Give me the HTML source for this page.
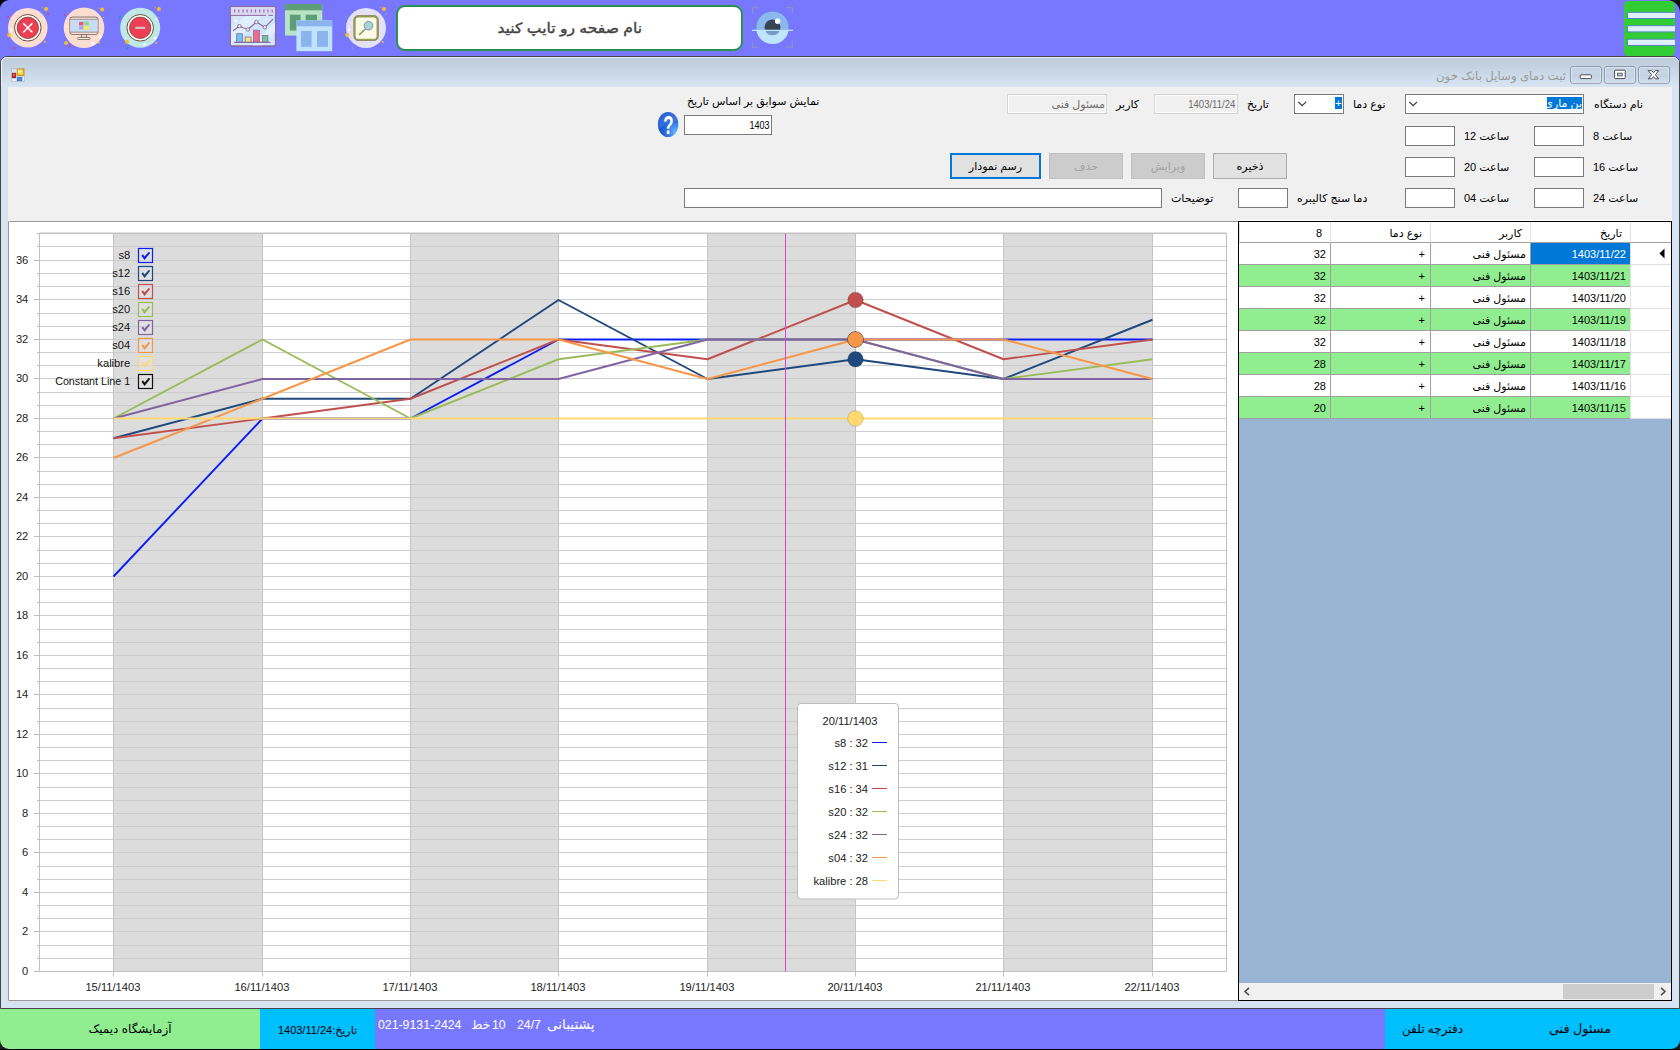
<!DOCTYPE html><html lang="fa"><head><meta charset="utf-8"><title>ثبت دمای وسایل بانک خون</title><style>
*{box-sizing:border-box;margin:0;padding:0}
html,body{width:1680px;height:1050px;overflow:hidden;background:#7878ff;font-family:"Liberation Sans", "DejaVu Sans", sans-serif;font-size:11px;color:#000}
.abs{position:absolute}
#top{position:absolute;left:0;top:0;width:1680px;height:56px;background:#7878ff}
#win{position:absolute;left:0;top:56px;width:1680px;height:953px;background:#d6e3f1;border:1px solid #464646;border-radius:7px 7px 0 0}
#title{position:absolute;left:0;top:0;width:1678px;height:30px;background:linear-gradient(#bdccdb,#c6d4e3 40%,#d7e5f3);border-top:1px solid #e7edf5;border-left:1px solid #eef3f9;border-radius:6px 6px 0 0}
#client{position:absolute;left:8px;top:87px;width:1664px;height:914px;background:#f0f0f0}
.lbl{position:absolute;white-space:nowrap;direction:rtl;font-size:11px;line-height:14px;height:14px}
.tb{position:absolute;background:#fff;border:1px solid #7a7a7a;height:20px}
.dis{position:absolute;background:#f0f0f0;border:1px solid #d4d4d4;box-shadow:inset 0 0 0 1px #fbfbfb;height:20px;color:#6d6d6d;text-align:right;padding:3px 3px 0 0;line-height:12px;font-size:11px;white-space:nowrap;direction:rtl}
.btn{position:absolute;height:26px;text-align:center;line-height:25px;font-size:11px;direction:rtl;white-space:nowrap}
.btn.on{background:#e1e1e1;border:1px solid #adadad}
.btn.off{background:#cccccc;border:1px solid #bfbfbf;color:#a3a3a3}
.btn.foc{background:#e1e1e1;border:2px solid #0078d7;line-height:23px}
#status{position:absolute;left:0;top:1009px;width:1680px;height:40px;background:#7878ff}
#status div{position:absolute;top:0;height:40px;white-space:nowrap;direction:rtl}
#grid{position:absolute;left:1238px;top:221px;width:434px;height:780px;background:#9ab4d3;border:1px solid #000;overflow:hidden}
.cell{position:absolute;height:22px;border-left:1px solid #a0a0a0;border-bottom:1px solid #a0a0a0;text-align:right;line-height:23px;font-size:11px;white-space:nowrap;direction:rtl;padding-right:4px;background:#fff;overflow:hidden}
.g .cell{background:#90ee90}
.hd{position:absolute;height:21px;background:#fff;border-left:1px solid #e0e0e0;border-bottom:1px solid #a0a0a0;text-align:right;line-height:22px;padding-right:8px;direction:rtl;white-space:nowrap;overflow:hidden}
</style></head><body>
<div id="top">
<svg class="abs" style="left:0;top:0" width="820" height="56" viewBox="0 0 820 56"><path d="M0 0H9A9 9 0 0 0 0 9Z" fill="#000"/><circle cx="27.8" cy="27.8" r="19.8" fill="#fbddd2"/><circle cx="27.8" cy="27.8" r="13.3" fill="#fffaee" stroke="#6b4c45" stroke-width="1"/><circle cx="27.8" cy="27.8" r="10.7" fill="#ee3e54" stroke="#6b4c45" stroke-width="0.8"/><path d="M23.6 23.6L32 32M32 23.6L23.6 32" stroke="#fff" stroke-width="1.5" stroke-linecap="round"/><circle cx="46.0" cy="9.1" r="2.0" fill="#f6bf26"/><circle cx="48.0" cy="14.0" r="1.0" fill="#ee3e54"/><circle cx="8.1" cy="16.5" r="1.0" fill="#ee3e54"/><circle cx="9.1" cy="35.0" r="2.0" fill="#f6bf26"/><circle cx="44.8" cy="41.8" r="1.0" fill="#f6bf26"/><circle cx="14.5" cy="47.9" r="1.0" fill="#ee3e54"/><circle cx="11.0" cy="29.9" r="1.3" fill="#ffffff"/><circle cx="44.0" cy="19.0" r="0.8" fill="#ffffff"/><circle cx="12.4" cy="37.2" r="0.6" fill="#f6bf26"/><circle cx="42.3" cy="7.6" r="0.5" fill="#f6bf26"/><circle cx="84" cy="27.8" r="20.3" fill="#fbddd2"/><rect x="81.5" y="34" width="5" height="4" fill="#ddd6cc" stroke="#6b4c45" stroke-width="0.7"/><rect x="77.6" y="37.5" width="12.4" height="2" rx="0.8" fill="#fff8e9" stroke="#6b4c45" stroke-width="0.7"/><rect x="69.9" y="17.1" width="28.1" height="17.3" rx="2.2" fill="#fff3e4" stroke="#6b4c45" stroke-width="0.8"/><rect x="70.3" y="19.2" width="27.3" height="13" fill="#c6dcf4"/><path d="M70.3 19.2H97.6M70.3 32.2H97.6" stroke="#6b4c45" stroke-width="0.6"/><rect x="79" y="21.9" width="4.3" height="3.5" fill="#f0508c"/><rect x="83.9" y="21.4" width="4.8" height="4" fill="#8edb8e"/><rect x="79" y="25.9" width="4.3" height="3.4" fill="#a9a9e2"/><rect x="83.9" y="25.9" width="4.8" height="3.9" fill="#f8ea52"/><circle cx="102.2" cy="9.6" r="2.0" fill="#f6bf26"/><circle cx="64.6" cy="15.0" r="1.0" fill="#ee3e54"/><circle cx="66.1" cy="43.0" r="2.0" fill="#f6bf26"/><circle cx="69.8" cy="45.9" r="1.0" fill="#ee3e54"/><circle cx="99.0" cy="42.5" r="1.0" fill="#f6bf26"/><circle cx="92.9" cy="43.3" r="1.5" fill="#ffffff"/><circle cx="100.2" cy="36.6" r="1.3" fill="#ffffff"/><circle cx="65.6" cy="26.8" r="0.7" fill="#ffffff"/><circle cx="103.4" cy="17.7" r="0.6" fill="#f6bf26"/><circle cx="98.8" cy="8.0" r="0.5" fill="#f6bf26"/><circle cx="140.2" cy="27.8" r="20" fill="#c0e8e4"/><circle cx="140.2" cy="27.8" r="13.3" fill="#fffaee" stroke="#6b4c45" stroke-width="1"/><circle cx="140.2" cy="27.8" r="10.7" fill="#ee3e54" stroke="#6b4c45" stroke-width="0.8"/><rect x="135.2" y="26.7" width="10" height="2.3" rx="0.6" fill="#cbc2c0"/><circle cx="158.9" cy="9.1" r="2.0" fill="#f6bf26"/><circle cx="120.0" cy="16.7" r="1.0" fill="#12a085"/><circle cx="127.0" cy="41.8" r="2.0" fill="#f6bf26"/><circle cx="127.5" cy="47.9" r="1.0" fill="#12a085"/><circle cx="156.2" cy="43.0" r="1.0" fill="#f6bf26"/><circle cx="144.7" cy="44.3" r="1.4" fill="#ffffff"/><circle cx="155.4" cy="38.0" r="1.2" fill="#ffffff"/><circle cx="155.9" cy="19.2" r="0.7" fill="#ffffff"/><circle cx="125.5" cy="38.5" r="0.6" fill="#ffffff"/><circle cx="158.8" cy="17.6" r="0.6" fill="#f0a080"/><circle cx="155.4" cy="7.6" r="0.5" fill="#f6bf26"/><rect x="230.3" y="6.6" width="45.3" height="39.3" rx="2" fill="#cfe6fb" stroke="#8e6ba0" stroke-width="1.5"/><path d="M230.9 7.2H275V15.3H230.9Z" fill="#dcd8f2"/><path d="M231 30L246 15.5H262L240 37.5L231 45.3ZM252 45.3L275 22V32L262 45.3Z" fill="#e2f1fd" opacity="0.8"/><path d="M231 15.4H266M268.5 15.4H273" stroke="#8e6ba0" stroke-width="1"/><path d="M234.6 9.6V12.6M238.8 9.6V12.6M243.0 9.6V12.6M247.1 9.6V12.6M251.3 9.6V12.6M255.5 9.6V12.6M259.7 9.6V12.6M263.9 9.6V12.6M268.0 9.6V12.6M272.2 9.6V12.6" stroke="#8e6ba0" stroke-width="1.1"/><rect x="236.7" y="33.7" width="5.8" height="8.6" fill="#6fc3f3" stroke="#8e6ba0" stroke-width="0.8"/><rect x="245.2" y="37" width="5.8" height="5.3" fill="#f9e272" stroke="#8e6ba0" stroke-width="0.8"/><rect x="253.5" y="30.2" width="6" height="12.1" fill="#f06a8c" stroke="#8e6ba0" stroke-width="0.8"/><rect x="262.3" y="35.4" width="5.6" height="6.9" fill="#6cc89a" stroke="#8e6ba0" stroke-width="0.8"/><path d="M234.4 42.4H270" stroke="#8e6ba0" stroke-width="1.1" stroke-linecap="round"/><path d="M233.4 30.5L239.3 26.2L247.9 29.5L256.4 22L264.8 27.3L272.8 19.3" fill="none" stroke="#8e6ba0" stroke-width="1.2" stroke-linecap="round" stroke-linejoin="round"/><circle cx="239.3" cy="26.2" r="1.7" fill="#fff" stroke="#8e6ba0" stroke-width="1"/><circle cx="247.9" cy="29.5" r="1.7" fill="#fff" stroke="#8e6ba0" stroke-width="1"/><circle cx="256.4" cy="22.0" r="1.7" fill="#fff" stroke="#8e6ba0" stroke-width="1"/><circle cx="264.8" cy="27.3" r="1.7" fill="#fff" stroke="#8e6ba0" stroke-width="1"/><path d="M235.9 18.6L236.7 20.3L238.4 20.9L236.7 21.6L235.9 23.3L235.1 21.6L233.4 20.9L235.1 20.3Z" fill="#fff"/><circle cx="246.6" cy="22.3" r="0.8" fill="#ffffff"/><circle cx="266.0" cy="19.6" r="1.1" fill="#f4eefa"/><rect x="285" y="4" width="37.3" height="31.6" fill="#b7e2c3"/><rect x="285" y="4" width="37.3" height="6.3" fill="#5e9e76"/><rect x="289.9" y="14.7" width="10.7" height="15.8" fill="#5e9e76"/><rect x="305.7" y="14.7" width="11.3" height="15.8" fill="#5e9e76"/><rect x="296.4" y="20.4" width="35.8" height="30.8" fill="#bfe3fd"/><rect x="296.4" y="20.4" width="35.8" height="5.9" fill="#8bb4ec"/><rect x="301" y="31" width="10.6" height="15.8" fill="#8bb4ec"/><rect x="317" y="31" width="11" height="15.8" fill="#8bb4ec"/><circle cx="366" cy="27.9" r="20" fill="#e3e0f8"/><rect x="354.6" y="16.4" width="23" height="23.4" rx="3.6" fill="#fdf9e8" stroke="#96a352" stroke-width="2.1"/><rect x="353.9" y="15.7" width="24.4" height="24.8" rx="4.2" fill="none" stroke="#7d6a55" stroke-width="0.5"/><path d="M365.6 28.8L362.8 31.4" stroke="#8a8a9a" stroke-width="1.4"/><path d="M363 31.2L359.6 34.3" stroke="#78b450" stroke-width="1.8" stroke-linecap="round"/><circle cx="368.5" cy="25.7" r="4.3" fill="#a0d8da" stroke="#8a8a9a" stroke-width="1"/><circle cx="384.0" cy="9.1" r="2.0" fill="#f6bf26"/><circle cx="347.2" cy="35.0" r="2.0" fill="#f6bf26"/><circle cx="345.9" cy="16.6" r="0.8" fill="#9a9ccc"/><circle cx="386.0" cy="13.9" r="0.8" fill="#9a9ccc"/><circle cx="382.9" cy="42.0" r="1.0" fill="#f6bf26"/><circle cx="352.5" cy="47.9" r="0.8" fill="#9a9ccc"/><circle cx="349.1" cy="29.8" r="1.2" fill="#ffffff"/><circle cx="380.6" cy="7.6" r="0.5" fill="#f6bf26"/><circle cx="350.5" cy="37.2" r="0.5" fill="#f6bf26"/><circle cx="375.5" cy="25.8" r="0.6" fill="#ffffff"/><circle cx="382.3" cy="19.6" r="0.6" fill="#ffffff"/><path d="M756.34 30.4A16.4 16.4 0 1 1 788.66 30.4Z" fill="#8bb8ee" stroke="#5d86c8" stroke-width="0.5"/><path d="M756.34 30.4A16.4 16.4 0 0 0 788.66 30.4Z" fill="#bfe5fd"/><path d="M765.19 30.4A7.9 7.9 0 1 1 779.81 30.4Z" fill="#3a4553"/><path d="M765.19 30.4A7.9 7.9 0 0 0 779.81 30.4Z" fill="#7a9bc8"/><path d="M752 30.4H793" stroke="#bfe5fd" stroke-width="1.1"/><circle cx="777.6" cy="21.3" r="2.7" fill="#fff"/><path d="M752.6 13.8V7.7H759M786 7.7H792.4V13.8M792.4 41V47.4H786M759 47.4H752.6V41" fill="none" stroke="#8990c4" stroke-width="1.2"/></svg><svg class="abs" style="left:1620px;top:0" width="60" height="57" viewBox="1620 0 60 57"><defs><clipPath id="hbc"><rect x="1624" y="1" width="51" height="55" rx="4.5"/></clipPath></defs><rect x="1624" y="1" width="51" height="55" rx="4.5" fill="#32cd32"/><rect x="1627.4" y="12.3" width="52" height="6.2" fill="#e0f0ff" stroke="#4f86c0" stroke-width="1" clip-path="url(#hbc)"/><rect x="1627.4" y="25.7" width="52" height="6.2" fill="#e0f0ff" stroke="#4f86c0" stroke-width="1" clip-path="url(#hbc)"/><rect x="1627.4" y="39.2" width="52" height="6.2" fill="#e0f0ff" stroke="#4f86c0" stroke-width="1" clip-path="url(#hbc)"/><path d="M1667 0H1680V13A13 13 0 0 0 1667 0Z" fill="#111"/></svg>
<div class="abs" style="left:396px;top:5px;width:347px;height:46px;background:#fff;border:2px solid #2a9150;border-radius:9px;text-align:center;line-height:43px;font-size:14.2px;font-weight:normal;-webkit-text-stroke:0.4px #444;color:#444;direction:rtl"><span style="display:inline-block;transform:scaleX(1.1)">نام صفحه رو تایپ کنید</span></div>
</div>
<div id="win"><div id="title"></div></div>
<div class="lbl" style="left:1300px;width:266px;top:68px;text-align:right;font-size:11.8px;color:#9a9a9a;line-height:16px;height:16px">ثبت دمای وسایل بانک خون</div>
<svg class="abs" style="left:0;top:56px" width="1680" height="32" viewBox="0 56 1680 32"><defs><linearGradient id="bg1" x1="0" y1="0" x2="0" y2="1"><stop offset="0" stop-color="#c4d1e1"/><stop offset="0.45" stop-color="#c9d6e6"/><stop offset="0.5" stop-color="#c2d0e1"/><stop offset="1" stop-color="#d3dfee"/></linearGradient></defs><rect x="1570.5" y="66.5" width="31" height="16.8" rx="2.5" fill="url(#bg1)" stroke="#8c9bb3" stroke-width="1"/><rect x="1571.5" y="67.5" width="29" height="14.8" rx="1.8" fill="none" stroke="#e4ecf6" stroke-width="0.8" opacity="0.8"/><rect x="1604.5" y="66.5" width="31" height="16.8" rx="2.5" fill="url(#bg1)" stroke="#8c9bb3" stroke-width="1"/><rect x="1605.5" y="67.5" width="29" height="14.8" rx="1.8" fill="none" stroke="#e4ecf6" stroke-width="0.8" opacity="0.8"/><rect x="1638.5" y="66.5" width="31" height="16.8" rx="2.5" fill="url(#bg1)" stroke="#8c9bb3" stroke-width="1"/><rect x="1639.5" y="67.5" width="29" height="14.8" rx="1.8" fill="none" stroke="#e4ecf6" stroke-width="0.8" opacity="0.8"/><rect x="1580.2" y="74.8" width="11.2" height="3.8" rx="0.8" fill="#fff" stroke="#4a4f58" stroke-width="1"/><rect x="1614.6" y="70.2" width="10.6" height="8.4" rx="0.8" fill="#fff" stroke="#4a4f58" stroke-width="1"/><rect x="1617.6" y="73.2" width="4.6" height="2.6" fill="#c6d3e3" stroke="#4a4f58" stroke-width="0.9"/><path d="M1648.2 70.6H1651.7L1653.5 72.8L1655.3 70.6H1658.8L1655.3 74.7L1658.8 78.8H1655.3L1653.5 76.6L1651.7 78.8H1648.2L1651.7 74.7Z" fill="#fff" stroke="#4a4f58" stroke-width="1" stroke-linejoin="round"/><rect x="11.5" y="68.5" width="13" height="13" fill="#d4e1ee" stroke="#b9bfc6" stroke-width="0.8"/><rect x="17.2" y="69" width="6.6" height="6.6" fill="#f8cf3a" stroke="#b88a00" stroke-width="0.8"/><rect x="18" y="69.8" width="3.6" height="3" fill="#fff3b0" opacity="0.85"/><rect x="12.2" y="73.2" width="3.6" height="4.6" fill="#c8201c" stroke="#8a0c0a" stroke-width="0.6"/><rect x="13.4" y="74" width="1.2" height="1.8" fill="#f4b0a8" opacity="0.9"/><rect x="17.2" y="77.2" width="4.8" height="3.6" fill="#4a8ae0" stroke="#2a60b8" stroke-width="0.5"/><rect x="12.4" y="79" width="1.8" height="1.8" fill="#f4f7fb"/><rect x="14.8" y="79" width="1.2" height="1.8" fill="#f4f7fb"/><rect x="22.8" y="77.2" width="1.2" height="3.6" fill="#eef3f9"/></svg>
<div id="client"></div>
<div class="lbl" style="right:37px;top:97px;">نام دستگاه</div>
<div class="lbl" style="left:1593px;top:129px;">ساعت 8</div>
<div class="lbl" style="left:1593px;top:160px;">ساعت 16</div>
<div class="lbl" style="left:1593px;top:191px;">ساعت 24</div>
<div class="lbl" style="left:1464px;top:129px;">ساعت 12</div>
<div class="lbl" style="left:1464px;top:160px;">ساعت 20</div>
<div class="lbl" style="left:1464px;top:191px;">ساعت 04</div>
<div class="lbl" style="left:1353px;top:97px;">نوع دما</div>
<div class="lbl" style="left:1247px;top:97px;">تاریخ</div>
<div class="lbl" style="left:1116px;top:97px;">کاربر</div>
<div class="lbl" style="left:1297px;top:191px;">دما سنج کالیبره</div>
<div class="lbl" style="left:1171px;top:191px;">توضیحات</div>
<div class="lbl" style="left:687px;top:94px;">نمایش سوابق بر اساس تاریخ</div>
<div class="tb" style="left:1405px;top:94px;width:179px;height:20px"><div class="abs" style="right:1px;top:2px;height:12px;width:35px;background:#0078d7;color:#fff;direction:rtl;text-align:right;line-height:12px;font-size:11px;white-space:nowrap;overflow:hidden">بن ماری</div><svg class="abs" style="left:3px;top:5px" width="12" height="8" viewBox="0 0 12 8"><path d="M0.4 1.9 L4.2 5.6 L8 1.9" fill="none" stroke="#3c3c3c" stroke-width="1.3"/></svg></div>
<div class="tb" style="left:1294px;top:94px;width:50px;height:20px"><div class="abs" style="right:1px;top:2px;height:12px;width:7px;background:#0078d7;color:#fff;text-align:center;line-height:12px;font-size:11px">+</div><svg class="abs" style="left:3px;top:5px" width="12" height="8" viewBox="0 0 12 8"><path d="M0.4 1.9 L4.2 5.6 L8 1.9" fill="none" stroke="#3c3c3c" stroke-width="1.3"/></svg></div>
<div class="tb" style="left:1534px;top:126px;width:50px"></div>
<div class="tb" style="left:1534px;top:157px;width:50px"></div>
<div class="tb" style="left:1534px;top:188px;width:50px"></div>
<div class="tb" style="left:1405px;top:126px;width:50px"></div>
<div class="tb" style="left:1405px;top:157px;width:50px"></div>
<div class="tb" style="left:1405px;top:188px;width:50px"></div>
<div class="tb" style="left:1238px;top:188px;width:50px"></div>
<div class="tb" style="left:684px;top:188px;width:478px"></div>
<div class="tb" style="left:684px;top:115px;width:88px;text-align:right;padding:3px 2px 0 0;line-height:12px;font-size:11px"><span style="display:inline-block;transform:scaleX(0.82);transform-origin:right center">1403</span></div>
<div class="dis" style="left:1154px;top:94px;width:84px;direction:ltr;padding-right:2px;font-size:10.6px"><span style="display:inline-block;transform:scaleX(0.9);transform-origin:right center">1403/11/24</span></div>
<div class="dis" style="left:1007px;top:94px;width:100px;padding-right:1px">مسئول فنی</div>
<div class="btn on" style="left:1213px;top:153px;width:74px">ذخیره</div>
<div class="btn off" style="left:1131px;top:153px;width:74px">ویرایش</div>
<div class="btn off" style="left:1049px;top:153px;width:74px">حذف</div>
<div class="btn foc" style="left:950px;top:153px;width:91px">رسم نمودار</div>
<svg class="abs" style="left:656px;top:110px" width="24" height="29" viewBox="656 110 24 29"><defs><radialGradient id="hg" cx="0.85" cy="0.8" r="0.95"><stop offset="0" stop-color="#62b8ff"/><stop offset="0.45" stop-color="#2f70de"/><stop offset="1" stop-color="#0f44c6"/></radialGradient><clipPath id="hc"><ellipse cx="668.1" cy="124.5" rx="10.2" ry="12.6"/></clipPath></defs><ellipse cx="668.1" cy="124.5" rx="10.2" ry="12.6" fill="url(#hg)"/><path d="M656 132 C662 124 672 121 681 120 V108 H656Z" fill="#5f8ee4" opacity="0.38" clip-path="url(#hc)"/><text transform="translate(668.4 134.2) scale(0.66 1)" text-anchor="middle" font-family="'Liberation Sans', sans-serif" font-weight="bold" font-size="25.5" fill="#fff">?</text></svg>
<svg class="abs" style="left:8px;top:221px" width="1230" height="780" viewBox="8 221 1230 780" font-family="'Liberation Sans', 'DejaVu Sans', sans-serif" font-size="11.15"><rect x="8" y="221" width="1230" height="780" fill="#fff"/><path d="M1238 221.5 H8.5 V1000.5 H1238" fill="none" stroke="#9a9a9a" stroke-width="1"/><rect x="113.5" y="233.5" width="149.0" height="738.0" fill="#dcdcdc"/><rect x="410.5" y="233.5" width="148.0" height="738.0" fill="#dcdcdc"/><rect x="707.5" y="233.5" width="148.0" height="738.0" fill="#dcdcdc"/><rect x="1003.5" y="233.5" width="149.0" height="738.0" fill="#dcdcdc"/><path d="M39.5 971.50H1226.5M39.5 958.50H1226.5M39.5 945.50H1226.5M39.5 931.50H1226.5M39.5 918.50H1226.5M39.5 905.50H1226.5M39.5 892.50H1226.5M39.5 879.50H1226.5M39.5 866.50H1226.5M39.5 852.50H1226.5M39.5 839.50H1226.5M39.5 826.50H1226.5M39.5 813.50H1226.5M39.5 800.50H1226.5M39.5 787.50H1226.5M39.5 773.50H1226.5M39.5 760.50H1226.5M39.5 747.50H1226.5M39.5 734.50H1226.5M39.5 721.50H1226.5M39.5 708.50H1226.5M39.5 694.50H1226.5M39.5 681.50H1226.5M39.5 668.50H1226.5M39.5 655.50H1226.5M39.5 642.50H1226.5M39.5 629.50H1226.5M39.5 615.50H1226.5M39.5 602.50H1226.5M39.5 589.50H1226.5M39.5 576.50H1226.5M39.5 563.50H1226.5M39.5 550.50H1226.5M39.5 536.50H1226.5M39.5 523.50H1226.5M39.5 510.50H1226.5M39.5 497.50H1226.5M39.5 484.50H1226.5M39.5 471.50H1226.5M39.5 457.50H1226.5M39.5 444.50H1226.5M39.5 431.50H1226.5M39.5 418.50H1226.5M39.5 405.50H1226.5M39.5 392.50H1226.5M39.5 378.50H1226.5M39.5 365.50H1226.5M39.5 352.50H1226.5M39.5 339.50H1226.5M39.5 326.50H1226.5M39.5 313.50H1226.5M39.5 299.50H1226.5M39.5 286.50H1226.5M39.5 273.50H1226.5M39.5 260.50H1226.5M39.5 246.50H1226.5M39.5 233.50H1226.5" stroke="#c9c9c9" stroke-width="1" fill="none" opacity="0.9"/><path d="M34.0 971.50H39.5M37.0 958.50H39.5M37.0 945.50H39.5M34.0 931.50H39.5M37.0 918.50H39.5M37.0 905.50H39.5M34.0 892.50H39.5M37.0 879.50H39.5M37.0 866.50H39.5M34.0 852.50H39.5M37.0 839.50H39.5M37.0 826.50H39.5M34.0 813.50H39.5M37.0 800.50H39.5M37.0 787.50H39.5M34.0 773.50H39.5M37.0 760.50H39.5M37.0 747.50H39.5M34.0 734.50H39.5M37.0 721.50H39.5M37.0 708.50H39.5M34.0 694.50H39.5M37.0 681.50H39.5M37.0 668.50H39.5M34.0 655.50H39.5M37.0 642.50H39.5M37.0 629.50H39.5M34.0 615.50H39.5M37.0 602.50H39.5M37.0 589.50H39.5M34.0 576.50H39.5M37.0 563.50H39.5M37.0 550.50H39.5M34.0 536.50H39.5M37.0 523.50H39.5M37.0 510.50H39.5M34.0 497.50H39.5M37.0 484.50H39.5M37.0 471.50H39.5M34.0 457.50H39.5M37.0 444.50H39.5M37.0 431.50H39.5M34.0 418.50H39.5M37.0 405.50H39.5M37.0 392.50H39.5M34.0 378.50H39.5M37.0 365.50H39.5M37.0 352.50H39.5M34.0 339.50H39.5M37.0 326.50H39.5M37.0 313.50H39.5M34.0 299.50H39.5M37.0 286.50H39.5M37.0 273.50H39.5M34.0 260.50H39.5M37.0 246.50H39.5M37.0 233.50H39.5" stroke="#bdbdbd" stroke-width="1" fill="none"/><path d="M113.5 233.5V976.5M262.5 233.5V976.5M410.5 233.5V976.5M558.5 233.5V976.5M707.5 233.5V976.5M855.5 233.5V976.5M1003.5 233.5V976.5M1152.5 233.5V976.5" stroke="#c4c4c4" stroke-width="1" fill="none"/><path d="M39.5 233.5 H1226.5 V971.5 H39.5 Z" fill="none" stroke="#c0c0c0" stroke-width="1"/><path d="M39.5 232.5H1226.5" stroke="#c8c8c8" stroke-width="1" opacity="0.5"/><text x="28.3" y="975.0" text-anchor="end" fill="#222">0</text><text x="28.3" y="935.0" text-anchor="end" fill="#222">2</text><text x="28.3" y="896.0" text-anchor="end" fill="#222">4</text><text x="28.3" y="856.0" text-anchor="end" fill="#222">6</text><text x="28.3" y="817.0" text-anchor="end" fill="#222">8</text><text x="28.3" y="777.0" text-anchor="end" fill="#222">10</text><text x="28.3" y="738.0" text-anchor="end" fill="#222">12</text><text x="28.3" y="698.0" text-anchor="end" fill="#222">14</text><text x="28.3" y="659.0" text-anchor="end" fill="#222">16</text><text x="28.3" y="619.0" text-anchor="end" fill="#222">18</text><text x="28.3" y="580.0" text-anchor="end" fill="#222">20</text><text x="28.3" y="540.0" text-anchor="end" fill="#222">22</text><text x="28.3" y="501.0" text-anchor="end" fill="#222">24</text><text x="28.3" y="461.0" text-anchor="end" fill="#222">26</text><text x="28.3" y="422.0" text-anchor="end" fill="#222">28</text><text x="28.3" y="382.0" text-anchor="end" fill="#222">30</text><text x="28.3" y="343.0" text-anchor="end" fill="#222">32</text><text x="28.3" y="303.0" text-anchor="end" fill="#222">34</text><text x="28.3" y="264.0" text-anchor="end" fill="#222">36</text><text x="112.9" y="991" text-anchor="middle" fill="#222">15/11/1403</text><text x="261.9" y="991" text-anchor="middle" fill="#222">16/11/1403</text><text x="409.9" y="991" text-anchor="middle" fill="#222">17/11/1403</text><text x="557.9" y="991" text-anchor="middle" fill="#222">18/11/1403</text><text x="706.9" y="991" text-anchor="middle" fill="#222">19/11/1403</text><text x="854.9" y="991" text-anchor="middle" fill="#222">20/11/1403</text><text x="1002.9" y="991" text-anchor="middle" fill="#222">21/11/1403</text><text x="1151.9" y="991" text-anchor="middle" fill="#222">22/11/1403</text><polyline points="113.5,576.50 262.5,418.50 410.5,418.50 558.5,339.50 707.5,339.50 855.5,339.50 1003.5,339.50 1152.5,339.50" fill="none" stroke="#0a1ef5" stroke-width="1.9" stroke-linejoin="round"/><polyline points="113.5,438.25 262.5,398.75 410.5,398.75 558.5,300.00 707.5,379.00 855.5,359.25 1003.5,379.00 1152.5,319.75" fill="none" stroke="#1f497d" stroke-width="1.9" stroke-linejoin="round"/><polyline points="113.5,438.25 262.5,418.50 410.5,398.75 558.5,339.50 707.5,359.25 855.5,300.00 1003.5,359.25 1152.5,339.50" fill="none" stroke="#c0504d" stroke-width="1.9" stroke-linejoin="round"/><polyline points="113.5,418.50 262.5,339.50 410.5,418.50 558.5,359.25 707.5,339.50 855.5,339.50 1003.5,379.00 1152.5,359.25" fill="none" stroke="#9bbb59" stroke-width="1.9" stroke-linejoin="round"/><polyline points="113.5,418.50 262.5,379.00 410.5,379.00 558.5,379.00 707.5,339.50 855.5,339.50 1003.5,379.00 1152.5,379.00" fill="none" stroke="#8064a2" stroke-width="1.9" stroke-linejoin="round"/><polyline points="113.5,458.00 262.5,398.75 410.5,339.50 558.5,339.50 707.5,379.00 855.5,339.50 1003.5,339.50 1152.5,379.00" fill="none" stroke="#f79646" stroke-width="1.9" stroke-linejoin="round"/><polyline points="113.5,418.50 262.5,418.50 410.5,418.50 558.5,418.50 707.5,418.50 855.5,418.50 1003.5,418.50 1152.5,418.50" fill="none" stroke="#ffd970" stroke-width="1.9" stroke-linejoin="round"/><path d="M785.5 233.5V971.5" stroke="#d941d6" stroke-width="1"/><circle cx="855.5" cy="339.50" r="7.8" fill="#0a1ef5" stroke="rgba(0,0,0,0.25)" stroke-width="0.6"/><circle cx="855.5" cy="359.25" r="7.8" fill="#1f497d" stroke="rgba(0,0,0,0.25)" stroke-width="0.6"/><circle cx="855.5" cy="300.00" r="7.8" fill="#c0504d" stroke="rgba(0,0,0,0.25)" stroke-width="0.6"/><circle cx="855.5" cy="339.50" r="7.8" fill="#9bbb59" stroke="rgba(0,0,0,0.25)" stroke-width="0.6"/><circle cx="855.5" cy="339.50" r="7.8" fill="#8064a2" stroke="rgba(0,0,0,0.25)" stroke-width="0.6"/><circle cx="855.5" cy="339.50" r="7.8" fill="#f79646" stroke="rgba(0,0,0,0.25)" stroke-width="0.6"/><circle cx="855.5" cy="418.50" r="7.8" fill="#ffd970" stroke="rgba(0,0,0,0.25)" stroke-width="0.6"/><text x="130.2" y="259.0" text-anchor="end" fill="#111">s8</text><rect x="138.5" y="248.5" width="14" height="14" fill="rgba(236,236,246,0.3)" stroke="#0a1ef5" stroke-width="1.2"/><path transform="translate(138 248.0)" d="M3.4 7.8L5 6.3L6.5 8.5L10.9 3.7L12.1 4.9L6.6 11.9Z" fill="#0a1ef5"/><text x="130.2" y="277.0" text-anchor="end" fill="#111">s12</text><rect x="138.5" y="266.5" width="14" height="14" fill="rgba(236,236,246,0.3)" stroke="#1f497d" stroke-width="1.2"/><path transform="translate(138 266.0)" d="M3.4 7.8L5 6.3L6.5 8.5L10.9 3.7L12.1 4.9L6.6 11.9Z" fill="#1f497d"/><text x="130.2" y="295.0" text-anchor="end" fill="#111">s16</text><rect x="138.5" y="284.5" width="14" height="14" fill="rgba(236,236,246,0.3)" stroke="#c0504d" stroke-width="1.2"/><path transform="translate(138 284.0)" d="M3.4 7.8L5 6.3L6.5 8.5L10.9 3.7L12.1 4.9L6.6 11.9Z" fill="#c0504d"/><text x="130.2" y="313.0" text-anchor="end" fill="#111">s20</text><rect x="138.5" y="302.5" width="14" height="14" fill="rgba(236,236,246,0.3)" stroke="#9bbb59" stroke-width="1.2"/><path transform="translate(138 302.0)" d="M3.4 7.8L5 6.3L6.5 8.5L10.9 3.7L12.1 4.9L6.6 11.9Z" fill="#9bbb59"/><text x="130.2" y="331.0" text-anchor="end" fill="#111">s24</text><rect x="138.5" y="320.5" width="14" height="14" fill="rgba(236,236,246,0.3)" stroke="#8064a2" stroke-width="1.2"/><path transform="translate(138 320.0)" d="M3.4 7.8L5 6.3L6.5 8.5L10.9 3.7L12.1 4.9L6.6 11.9Z" fill="#8064a2"/><text x="130.2" y="349.0" text-anchor="end" fill="#111">s04</text><rect x="138.5" y="338.5" width="14" height="14" fill="rgba(236,236,246,0.3)" stroke="#f79646" stroke-width="1.2"/><path transform="translate(138 338.0)" d="M3.4 7.8L5 6.3L6.5 8.5L10.9 3.7L12.1 4.9L6.6 11.9Z" fill="#f79646"/><text x="130.2" y="367.0" text-anchor="end" fill="#111">kalibre</text><rect x="138.5" y="356.5" width="14" height="14" fill="rgba(236,236,246,0.3)" stroke="#ffd970" stroke-width="1.2"/><path transform="translate(138 356.0)" d="M3.4 7.8L5 6.3L6.5 8.5L10.9 3.7L12.1 4.9L6.6 11.9Z" fill="#ffd970"/><text x="130.2" y="385.0" text-anchor="end" fill="#111" textLength="75" lengthAdjust="spacingAndGlyphs">Constant Line 1</text><rect x="138.5" y="374.5" width="14" height="14" fill="rgba(236,236,246,0.3)" stroke="#111" stroke-width="1.2"/><path transform="translate(138 374.0)" d="M3.4 7.8L5 6.3L6.5 8.5L10.9 3.7L12.1 4.9L6.6 11.9Z" fill="#111"/><rect x="797.5" y="703.5" width="101" height="195.5" rx="3.5" fill="#fff" stroke="#bcbcbc"/><text x="850" y="725" text-anchor="middle" fill="#222">20/11/1403</text><text x="868" y="747.0" text-anchor="end" fill="#222">s8 : 32</text><path d="M872 742.5H887" stroke="#0a1ef5" stroke-width="1"/><text x="868" y="770.0" text-anchor="end" fill="#222">s12 : 31</text><path d="M872 765.5H887" stroke="#1f497d" stroke-width="1"/><text x="868" y="793.0" text-anchor="end" fill="#222">s16 : 34</text><path d="M872 788.5H887" stroke="#c0504d" stroke-width="1"/><text x="868" y="816.0" text-anchor="end" fill="#222">s20 : 32</text><path d="M872 811.5H887" stroke="#9bbb59" stroke-width="1"/><text x="868" y="839.0" text-anchor="end" fill="#222">s24 : 32</text><path d="M872 834.5H887" stroke="#8064a2" stroke-width="1"/><text x="868" y="862.0" text-anchor="end" fill="#222">s04 : 32</text><path d="M872 857.5H887" stroke="#f79646" stroke-width="1"/><text x="868" y="885.0" text-anchor="end" fill="#222">kalibre : 28</text><path d="M872 880.5H887" stroke="#ffd970" stroke-width="1"/></svg>
<div class="abs" style="left:1238px;top:220px;width:434px;height:1px;background:#fff"></div>
<div id="grid">
<div class="hd" style="left:391px;top:0;width:41px;border-left:1px solid #e0e0e0"></div>
<div class="hd" style="left:291px;top:0;width:100px">تاریخ</div>
<div class="hd" style="left:191px;top:0;width:100px">کاربر</div>
<div class="hd" style="left:91px;top:0;width:100px">نوع دما</div>
<div class="hd" style="left:0px;top:0;width:91px">8</div>
<div class="w">
<div class="cell" style="left:391px;top:21px;width:41px;background:#fff;border-left:1px solid #e0e0e0;border-bottom:1px solid #e0e0e0"><svg class="abs" style="left:28px;top:5px" width="6" height="11" viewBox="0 0 6 11"><path d="M5.5 0.5 L0.5 5.5 L5.5 10.5 Z" fill="#000"/></svg></div>
<div class="cell" style="left:291px;top:21px;width:100px;direction:ltr;background:#0078d7;color:#fff">1403/11/22</div>
<div class="cell" style="left:191px;top:21px;width:100px">مسئول فنی</div>
<div class="cell" style="left:91px;top:21px;width:100px;padding-right:5px">+</div>
<div class="cell" style="left:0;top:21px;width:91px;border-left:none;direction:ltr">32</div>
</div>
<div class="g">
<div class="cell" style="left:391px;top:43px;width:41px;background:#fff;border-left:1px solid #e0e0e0;border-bottom:1px solid #e0e0e0"></div>
<div class="cell" style="left:291px;top:43px;width:100px;direction:ltr">1403/11/21</div>
<div class="cell" style="left:191px;top:43px;width:100px">مسئول فنی</div>
<div class="cell" style="left:91px;top:43px;width:100px;padding-right:5px">+</div>
<div class="cell" style="left:0;top:43px;width:91px;border-left:none;direction:ltr">32</div>
</div>
<div class="w">
<div class="cell" style="left:391px;top:65px;width:41px;background:#fff;border-left:1px solid #e0e0e0;border-bottom:1px solid #e0e0e0"></div>
<div class="cell" style="left:291px;top:65px;width:100px;direction:ltr">1403/11/20</div>
<div class="cell" style="left:191px;top:65px;width:100px">مسئول فنی</div>
<div class="cell" style="left:91px;top:65px;width:100px;padding-right:5px">+</div>
<div class="cell" style="left:0;top:65px;width:91px;border-left:none;direction:ltr">32</div>
</div>
<div class="g">
<div class="cell" style="left:391px;top:87px;width:41px;background:#fff;border-left:1px solid #e0e0e0;border-bottom:1px solid #e0e0e0"></div>
<div class="cell" style="left:291px;top:87px;width:100px;direction:ltr">1403/11/19</div>
<div class="cell" style="left:191px;top:87px;width:100px">مسئول فنی</div>
<div class="cell" style="left:91px;top:87px;width:100px;padding-right:5px">+</div>
<div class="cell" style="left:0;top:87px;width:91px;border-left:none;direction:ltr">32</div>
</div>
<div class="w">
<div class="cell" style="left:391px;top:109px;width:41px;background:#fff;border-left:1px solid #e0e0e0;border-bottom:1px solid #e0e0e0"></div>
<div class="cell" style="left:291px;top:109px;width:100px;direction:ltr">1403/11/18</div>
<div class="cell" style="left:191px;top:109px;width:100px">مسئول فنی</div>
<div class="cell" style="left:91px;top:109px;width:100px;padding-right:5px">+</div>
<div class="cell" style="left:0;top:109px;width:91px;border-left:none;direction:ltr">32</div>
</div>
<div class="g">
<div class="cell" style="left:391px;top:131px;width:41px;background:#fff;border-left:1px solid #e0e0e0;border-bottom:1px solid #e0e0e0"></div>
<div class="cell" style="left:291px;top:131px;width:100px;direction:ltr">1403/11/17</div>
<div class="cell" style="left:191px;top:131px;width:100px">مسئول فنی</div>
<div class="cell" style="left:91px;top:131px;width:100px;padding-right:5px">+</div>
<div class="cell" style="left:0;top:131px;width:91px;border-left:none;direction:ltr">28</div>
</div>
<div class="w">
<div class="cell" style="left:391px;top:153px;width:41px;background:#fff;border-left:1px solid #e0e0e0;border-bottom:1px solid #e0e0e0"></div>
<div class="cell" style="left:291px;top:153px;width:100px;direction:ltr">1403/11/16</div>
<div class="cell" style="left:191px;top:153px;width:100px">مسئول فنی</div>
<div class="cell" style="left:91px;top:153px;width:100px;padding-right:5px">+</div>
<div class="cell" style="left:0;top:153px;width:91px;border-left:none;direction:ltr">28</div>
</div>
<div class="g">
<div class="cell" style="left:391px;top:175px;width:41px;background:#fff;border-left:1px solid #e0e0e0;border-bottom:1px solid #e0e0e0"></div>
<div class="cell" style="left:291px;top:175px;width:100px;direction:ltr">1403/11/15</div>
<div class="cell" style="left:191px;top:175px;width:100px">مسئول فنی</div>
<div class="cell" style="left:91px;top:175px;width:100px;padding-right:5px">+</div>
<div class="cell" style="left:0;top:175px;width:91px;border-left:none;direction:ltr">20</div>
</div>
<div class="abs" style="left:0;top:761px;width:432px;height:17px;background:#f0f0f0"><div class="abs" style="left:324px;top:1px;width:91px;height:15px;background:#cdcdcd"></div><svg class="abs" style="left:4px;top:4px" width="8" height="9" viewBox="0 0 8 9"><path d="M6 0.8 L2 4.5 L6 8.2" fill="none" stroke="#505050" stroke-width="1.6"/></svg><svg class="abs" style="left:420px;top:4px" width="8" height="9" viewBox="0 0 8 9"><path d="M2 0.8 L6 4.5 L2 8.2" fill="none" stroke="#505050" stroke-width="1.6"/></svg></div>
</div>
<div id="status">
<div style="left:0;width:12px;top:28px;height:12px;background:#1c1c1c"></div><div style="left:1668px;width:12px;top:28px;height:12px;background:#1c1c1c"></div>
<div style="left:0;width:260px;background:#90ee90;border-radius:0 0 0 9px;text-align:center;line-height:40px;font-size:12px">آزمایشگاه دیمیک</div>
<div style="left:260px;width:115px;background:#00bfff;text-align:center;line-height:42px;font-size:11px">تاریخ:1403/11/24</div>
<div style="left:378px;color:#fff;line-height:32px;font-size:12.3px;height:32px;">021-9131-2424</div>
<div style="left:471px;color:#fff;line-height:32px;font-size:12.3px;height:32px;">خط</div>
<div style="left:492px;color:#fff;line-height:32px;font-size:12.3px;height:32px;">10</div>
<div style="left:517px;color:#fff;line-height:32px;font-size:12.3px;height:32px;">24/7</div>
<div style="left:547px;color:#fff;line-height:32px;font-size:12.3px;height:32px;font-size:13.6px;line-height:31px">پشتیبانی</div>
<div style="left:1385px;width:295px;background:#00bfff;border-radius:0 0 9px 0"></div>
<div style="left:1385px;width:95px;text-align:center;line-height:40px;font-size:12px;background:none">دفترچه تلفن</div>
<div style="left:1530px;width:100px;text-align:center;line-height:40px;font-size:12.8px;background:none">مسئول فنی</div>
</div>
<div class="abs" style="left:0;top:1049px;width:1680px;height:1px;background:#000"></div>
</body></html>
